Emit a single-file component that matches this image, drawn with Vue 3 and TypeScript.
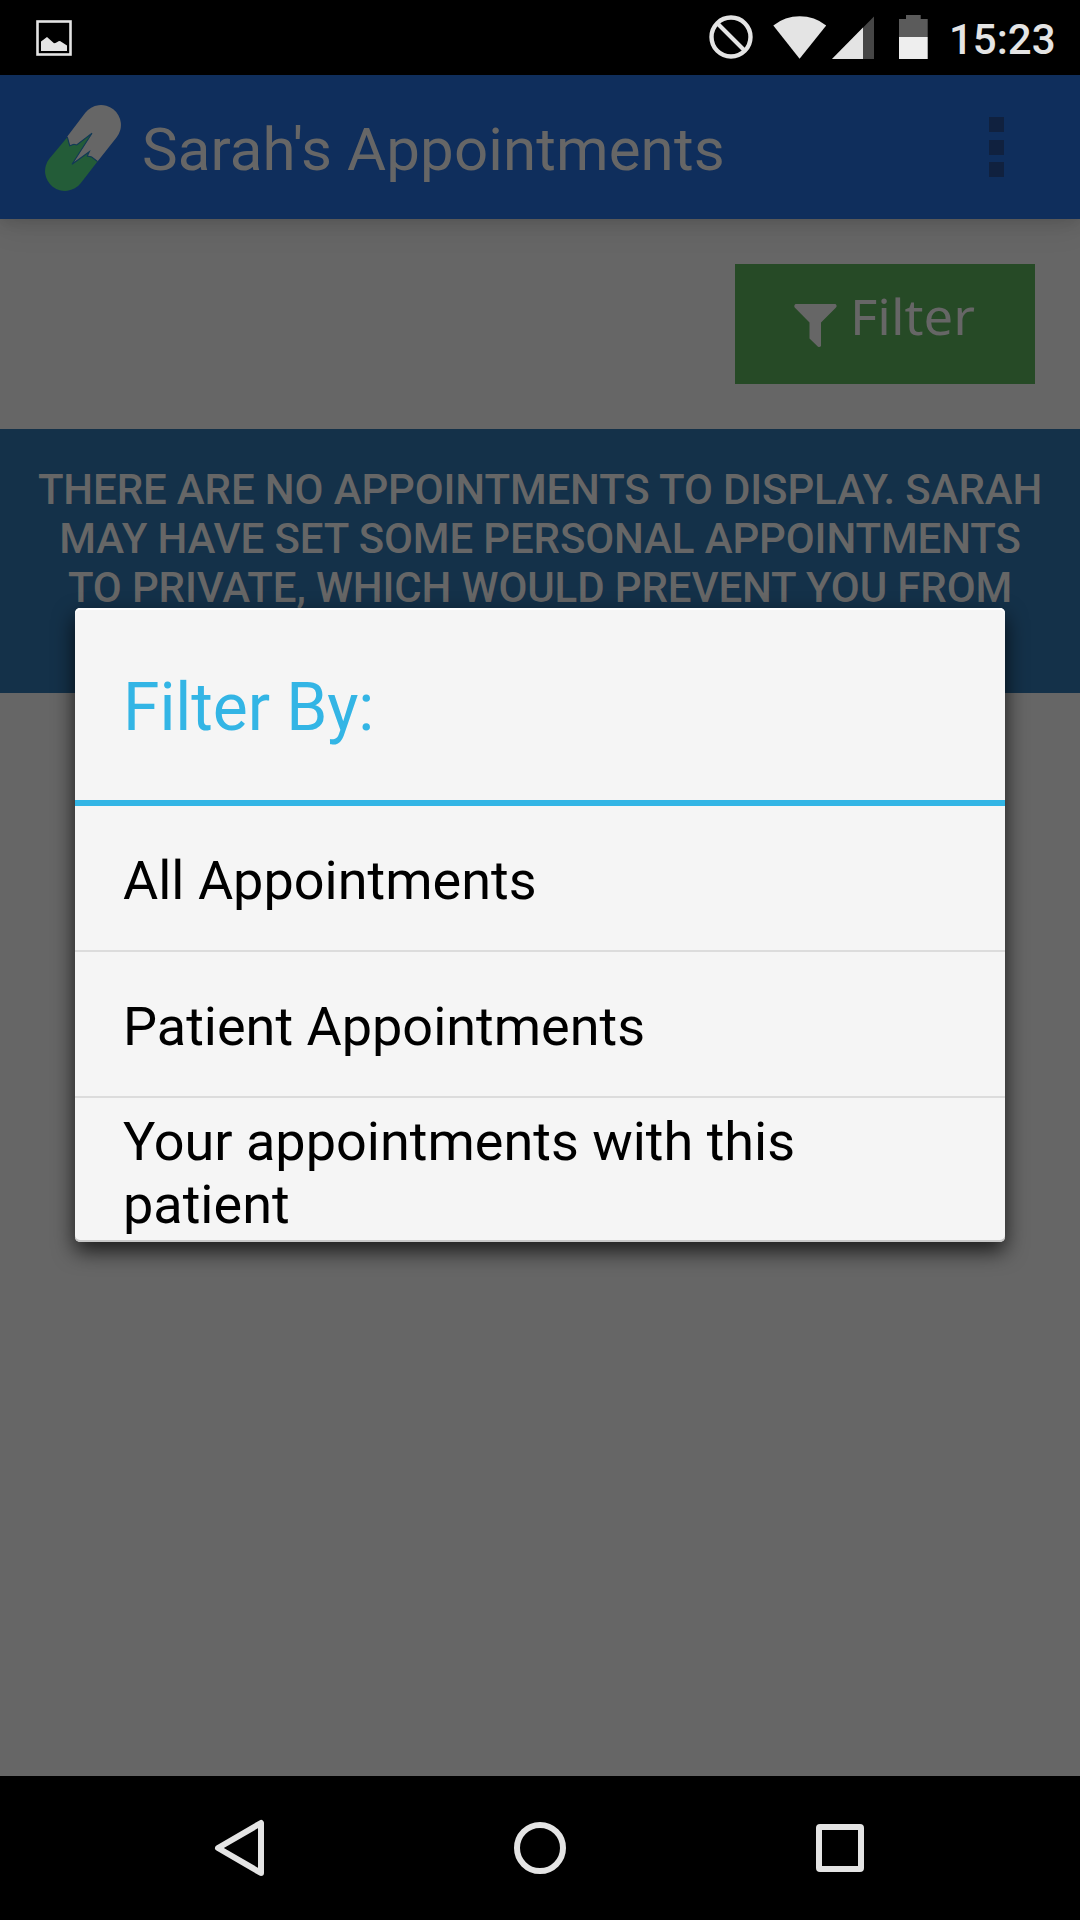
<script setup lang="ts">
const filters: string[] = [
  'All Appointments',
  'Patient Appointments',
  'Your appointments with this patient',
]
</script>

<template>
  <div class="screen">
    <div class="status">
      <svg class="picture" width="36" height="36" viewBox="0 0 36 36">
        <rect x="1.500" y="1.500" width="33" height="33" fill="none" stroke="#e4e4e4" stroke-width="2.600" />
        <path d="M5 21.500 11 17l7 6.300c1.800 0 4-2.300 6-2.300l7 4.500V31H5z" fill="#e4e4e4" />
      </svg>
      <svg class="blocked" width="44" height="44" viewBox="0 0 44 44">
        <circle cx="22" cy="22" r="19.500" fill="none" stroke="#e4e4e4" stroke-width="4.400" />
        <path d="M8.500 8.500 35.500 35.500" stroke="#e4e4e4" stroke-width="4" />
      </svg>
      <svg class="wifi" width="54" height="44" viewBox="0 0 54 44">
        <path d="M0.300 10.500A42 42 0 0 1 53.200 10.500L26.600 43.800z" fill="#e4e4e4" />
      </svg>
      <svg class="signal" width="43" height="43" viewBox="0 0 43 43">
        <path d="M42 .5V43H0z" fill="#464646" />
        <path d="M31 11.600V43H0z" fill="#e4e4e4" />
      </svg>
      <svg class="battery" width="29" height="44" viewBox="0 0 29 44">
        <path d="M7 0h14.700v4H28.700v18H0V4h7z" fill="#5b5b5b" />
        <rect y="22" width="28.700" height="22" fill="#eee" />
      </svg>
      <span class="time">15:23</span>
    </div>

    <header class="appbar">
      <svg class="logo" width="78" height="92" viewBox="44 100 78 92">
        <path
          d="M85.300 112.700A19.900 19.900 0 0 1 116.700 137.300L97.500 161.500 91.700 157 87.300 156 89.300 151.700 72 164.300 92 133.300 76.700 145 74 144.300 69.700 145.700 67.300 136.500z"
          fill="#666"
        />
        <path
          d="M67.300 137.300 49.300 158.700A19.900 19.900 0 0 0 80.700 183.300L97.500 161.500 91.700 157 87.300 156 89.300 151.700 72 164.300 92 133.300 76.700 145 74 144.300 69.700 145.700z"
          fill="#235c38"
        />
        <path
          d="M67.300 137 69.700 145.700 74 144.300 76.700 145 92 133.300 72 164.300 89.300 151.700 87.300 156 91.700 157 97.500 161.500"
          fill="none"
          stroke="#123a56"
          stroke-width="1.100"
        />
      </svg>
      <h1>Sarah's Appointments</h1>
      <div class="more"><i></i><i></i><i></i></div>
    </header>

    <main>
      <div class="toolbar">
        <button class="filter">
          <svg width="43" height="44" viewBox="0 0 43 44">
            <path d="M1.500 0h40q2 1.500.5 3.500L27 18.500V42q-1 1.500-3 .8L15.500 34.500V18.500L.7 3.500Q-.5 1.500 1.500 0z" fill="#666" />
          </svg>
          <span>Filter</span>
        </button>
      </div>
      <p class="banner">
        THERE ARE NO APPOINTMENTS TO DISPLAY. SARAH MAY HAVE SET SOME PERSONAL APPOINTMENTS TO
        PRIVATE, WHICH WOULD PREVENT YOU FROM SEEING THEM.
      </p>
    </main>

    <nav>
      <div class="key">
        <svg width="60" height="60" viewBox="0 0 60 60">
          <path d="M8 30 51 5V55z" fill="none" stroke="#e4e4e4" stroke-width="6" stroke-linejoin="round" />
        </svg>
      </div>
      <div class="key">
        <svg width="60" height="60" viewBox="0 0 60 60">
          <circle cx="30" cy="30" r="23" fill="none" stroke="#e4e4e4" stroke-width="6" />
        </svg>
      </div>
      <div class="key">
        <svg width="60" height="60" viewBox="0 0 60 60">
          <path d="M10 6h40q4 0 4 4v40q0 4-4 4h-40q-4 0-4-4v-40q0-4 4-4zM12 12v36h36v-36z" fill="#e4e4e4" fill-rule="evenodd" />
        </svg>
      </div>
    </nav>

    <section class="dialog">
      <h2>Filter By:</h2>
      <ul>
        <li v-for="f in filters" :key="f"><span>{{ f }}</span></li>
      </ul>
    </section>
  </div>
</template>

<style>
body {
  margin: 0;
  background: #000;
}
</style>

<style scoped>
.screen {
  position: relative;
  display: flex;
  flex-direction: column;
  width: 1080px;
  height: 1920px;
  overflow: hidden;
  background: #666;
  font-family: Roboto, 'Noto Sans', sans-serif;
}
svg {
  display: block;
  flex: none;
}
.status {
  display: flex;
  align-items: flex-start;
  height: 75px;
  flex: none;
  background: #000;
}
.picture {
  margin: 20px 0 0 36px;
}
.blocked {
  margin: 15.300px 0 0 637px;
}
.wifi {
  margin: 15px 0 0 20px;
}
.signal {
  margin: 16px 0 0 4.700px;
}
.battery {
  margin: 15px 0 0 24.300px;
}
.time {
  margin: 15px 0 0 21px;
  font-size: 42px;
  font-weight: 500;
  line-height: 49px;
  color: #e4e4e4;
}
.appbar {
  position: relative;
  z-index: 1;
  display: flex;
  align-items: center;
  box-sizing: border-box;
  flex: none;
  height: 144px;
  padding: 0 76px 0 44px;
  background: #0f2e5c;
  box-shadow: 0 3px 14px rgba(0, 0, 0, 0.13), 0 8px 30px rgba(0, 0, 0, 0.08);
}
.logo {
  margin-top: -2px;
}
h1 {
  margin: 5px 0 0 20px;
  font-size: 60px;
  font-weight: 400;
  line-height: 70px;
  letter-spacing: 0.120px;
  color: #666;
  white-space: nowrap;
}
.more {
  display: flex;
  flex-direction: column;
  gap: 7.500px;
  margin-left: auto;
}
.more i {
  width: 15px;
  height: 15px;
  background: #10213f;
}
main {
  flex: 1;
}
.toolbar {
  display: flex;
  justify-content: flex-end;
  padding: 45px;
}
.filter {
  display: flex;
  align-items: flex-start;
  box-sizing: border-box;
  width: 300px;
  height: 120px;
  padding: 0 0 0 59px;
  border: 0;
  background: #264a26;
  color: #666;
  font: 400 49px/66px 'Noto Sans', sans-serif;
}
.filter svg {
  margin-top: 40px;
}
.filter span {
  margin: 19px 0 0 13px;
  transform: scaleX(1.075);
  transform-origin: left;
}
.banner {
  box-sizing: border-box;
  height: 264px;
  margin: 0;
  padding: 36px 30px 0;
  background: #143149;
  color: #666;
  font-size: 42px;
  font-weight: 500;
  line-height: 49px;
  letter-spacing: -0.120px;
  text-align: center;
}
nav {
  display: flex;
  justify-content: center;
  flex: none;
  height: 144px;
  background: #000;
}
.key {
  display: flex;
  align-items: center;
  justify-content: center;
  width: 300px;
}
.dialog {
  position: absolute;
  z-index: 2;
  top: 608px;
  left: 75px;
  display: flex;
  flex-direction: column;
  width: 930px;
  height: 634px;
  border-radius: 5px;
  background: #f5f5f5;
  box-shadow: inset 0 2px 0 #fff, inset 0 -2px 0 #c8c8c8, 0 9px 21px rgba(0, 0, 0, 0.75);
}
h2 {
  box-sizing: border-box;
  height: 198px;
  margin: 0;
  padding: 61px 48px 0;
  border-bottom: 6px solid #33b5e5;
  color: #33b5e5;
  font-size: 66px;
  font-weight: 400;
  line-height: 78px;
  letter-spacing: -0.100px;
}
ul {
  margin: 0;
  padding: 0;
  list-style: none;
}
li {
  display: flex;
  align-items: center;
  box-sizing: border-box;
  height: 146px;
  padding: 4px 150px 0 48px;
  border-bottom: 2px solid #dcdcdc;
  color: #000;
  font-size: 54px;
  line-height: 63px;
}
li:last-child {
  height: 144px;
  padding-top: 5px;
  border: 0;
}
</style>
